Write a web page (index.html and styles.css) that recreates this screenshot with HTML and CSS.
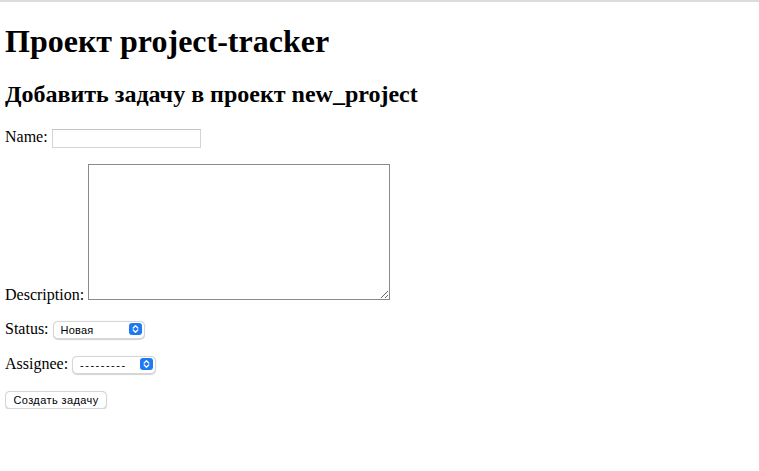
FILE: index.html
```html
<!DOCTYPE html>
<html lang="ru">
<head>
<meta charset="utf-8">
<title>Проект project-tracker</title>
<link rel="stylesheet" href="styles.css">
</head>
<body>
<h1 class="title">Проект project-tracker</h1>
<h2 class="subtitle">Добавить задачу в проект new_project</h2>
<form class="task-form">
  <p class="row"><label for="id_name">Name:</label> <input class="text-input" type="text" id="id_name"></p>
  <p class="row"><label for="id_description">Description:</label> <textarea class="area" id="id_description"></textarea></p>
  <p class="row"><label for="id_status">Status:</label> <span class="select-wrap status"><select class="select" id="id_status"><option>Новая</option></select><svg class="chev" width="13" height="12" viewBox="0 0 13 12"><rect x="0" y="0" width="13" height="12" rx="3" fill="#1d7af3"/><path d="M4.2 5 L6.5 2.8 L8.8 5 M4.2 7 L6.5 9.2 L8.8 7" fill="none" stroke="#fff" stroke-width="1.3" stroke-linecap="round" stroke-linejoin="round"/></svg></span></p>
  <p class="row"><label for="id_assignee">Assignee:</label> <span class="select-wrap assignee"><select class="select" id="id_assignee"><option>---------</option></select><svg class="chev" width="13" height="12" viewBox="0 0 13 12"><rect x="0" y="0" width="13" height="12" rx="3" fill="#1d7af3"/><path d="M4.2 5 L6.5 2.8 L8.8 5 M4.2 7 L6.5 9.2 L8.8 7" fill="none" stroke="#fff" stroke-width="1.3" stroke-linecap="round" stroke-linejoin="round"/></svg></span></p>
  <button class="btn" type="submit">Создать задачу</button>
</form>
</body>
</html>
```

FILE: styles.css
```css
html {
  border-top: 2px solid #dcdcdc;
  background: #fff;
}
body {
  margin: 8px 8px 8px 5px;
  font-family: "Liberation Serif", "Times New Roman", serif;
  font-size: 16px;
  color: #000;
}
.title {
  font-size: 32px;
  font-weight: bold;
  margin: 13px 0 21px;
}
.subtitle {
  font-size: 24px;
  font-weight: bold;
  margin: 20px 0;
}
.row {
  margin: 16px 0;
}
.text-input {
  width: 149px;
  height: 19px;
  box-sizing: border-box;
  border: 1px solid #d4d4d4;
  border-top-color: #c4c4c4;
  padding: 0 3px;
  margin: 0;
  vertical-align: baseline;
  font-size: 11px;
}
.area {
  width: 302px;
  height: 136px;
  box-sizing: border-box;
  border: 1px solid #8a8a8a;
  margin: 0;
  padding: 2px;
  vertical-align: baseline;
  resize: both;
  font-family: "Liberation Mono", monospace;
  font-size: 13px;
}
.select-wrap {
  position: relative;
  display: inline-block;
  vertical-align: baseline;
}
.select {
  appearance: none;
  -webkit-appearance: none;
  box-sizing: border-box;
  height: 18px;
  border: 1px solid #d6d6d6;
  border-radius: 5px;
  box-shadow: 0 0.5px 1px rgba(0,0,0,0.18);
  background: #fff;
  font-family: "Liberation Sans", Arial, sans-serif;
  font-size: 11px;
  letter-spacing: 0.2px;
  color: #000;
  padding: 0 0 0 7px;
  margin: 0;
}
.status .select { width: 92px; }
.assignee .select { width: 84px; letter-spacing: 1.5px; }
.chev {
  position: absolute;
  right: 3px;
  top: 3px;
  pointer-events: none;
}
.btn {
  box-sizing: border-box;
  height: 18px;
  width: 102px;
  margin: 0;
  padding: 0;
  border: 1px solid #d6d6d6;
  border-radius: 5px;
  box-shadow: 0 0.5px 1px rgba(0,0,0,0.18);
  background: #fff;
  font-family: "Liberation Sans", Arial, sans-serif;
  font-size: 11px;
  letter-spacing: 0.4px;
  color: #000;
}
```
